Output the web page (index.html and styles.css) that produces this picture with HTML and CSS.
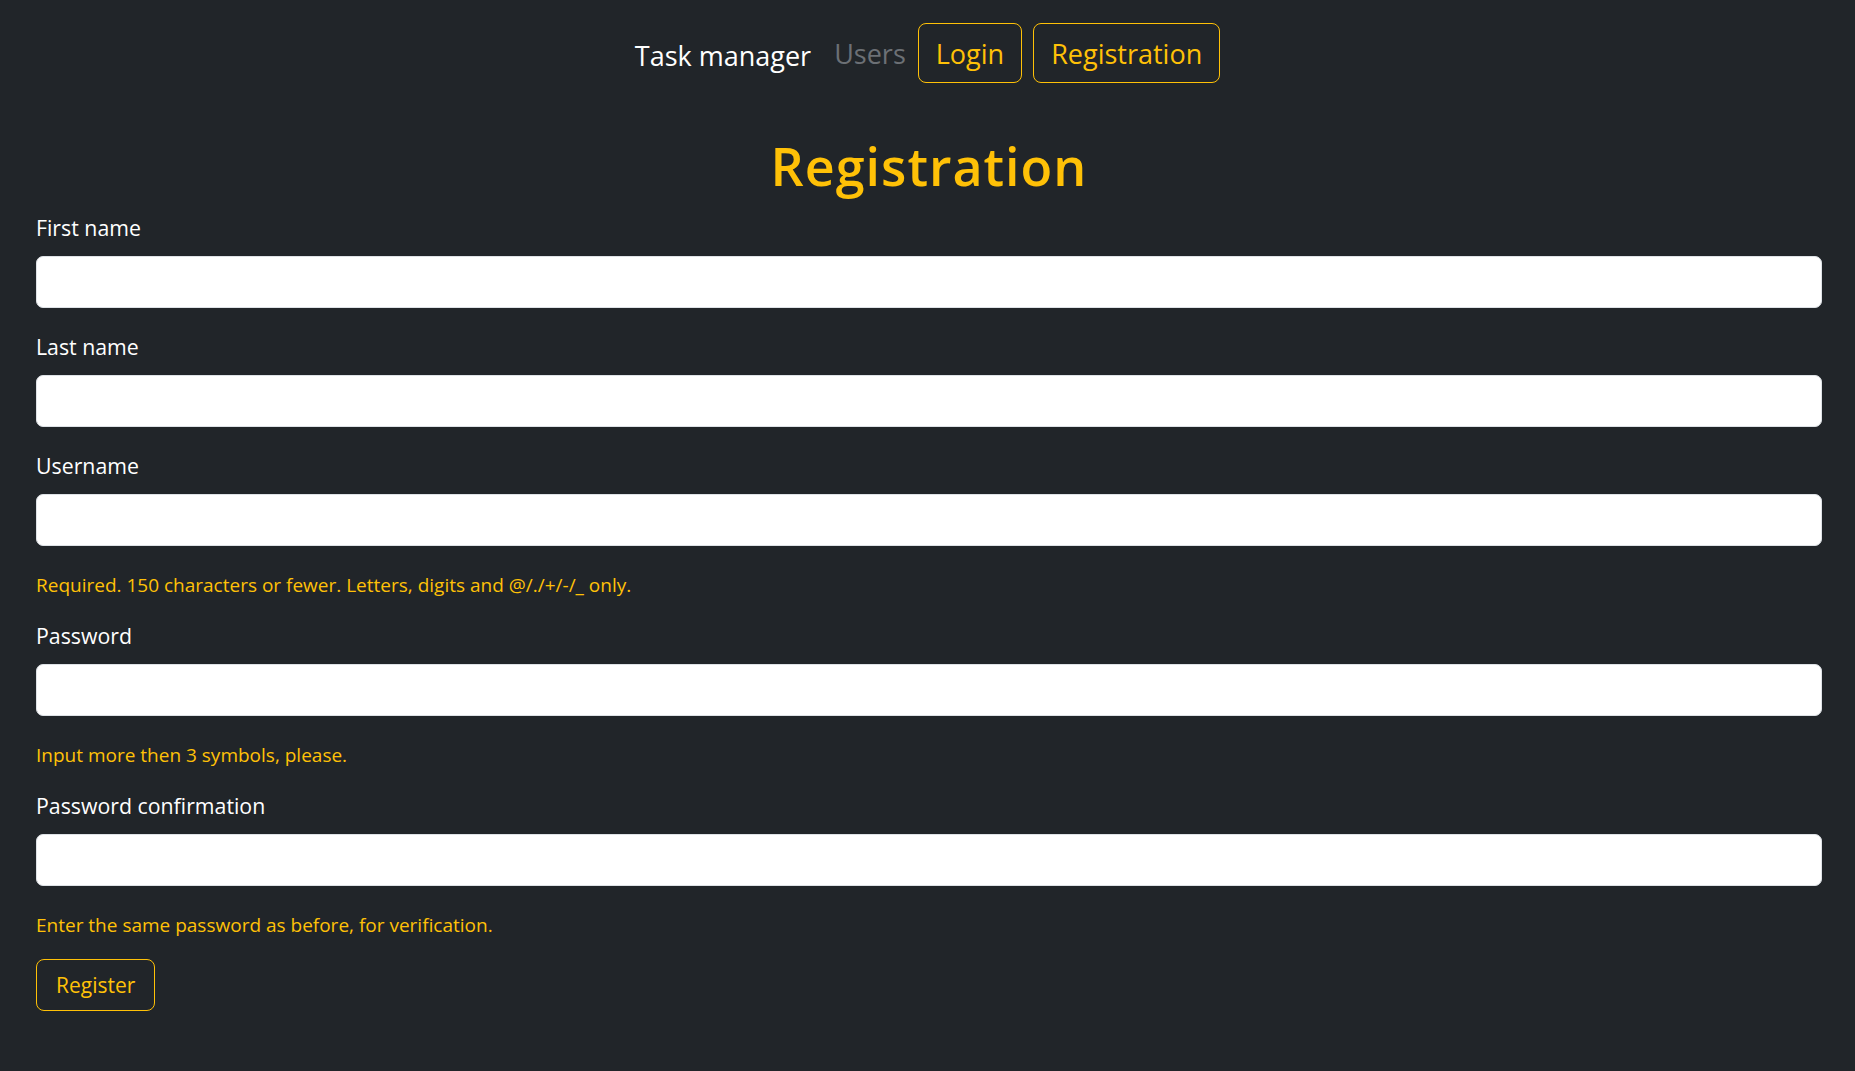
FILE: index.html
```html
<!DOCTYPE html>
<html lang="en">
<head>
<meta charset="utf-8">
<title>Registration</title>
<link rel="stylesheet" href="styles.css">
</head>
<body>
<nav class="topnav">
  <a class="brand" href="#">Task manager</a>
  <a class="nav-link" href="#">Users</a>
  <a class="btn-nav" href="#">Login</a>
  <a class="btn-nav" href="#">Registration</a>
</nav>
<main class="page">
  <h1 class="title">Registration</h1>
  <form class="reg-form">
    <div class="field">
      <label class="field-label" for="first">First name</label>
      <input class="field-input" id="first" type="text">
    </div>
    <div class="field">
      <label class="field-label" for="last">Last name</label>
      <input class="field-input" id="last" type="text">
    </div>
    <div class="field">
      <label class="field-label" for="user">Username</label>
      <input class="field-input" id="user" type="text">
    </div>
    <p class="help">Required. 150 characters or fewer. Letters, digits and @/./+/-/_ only.</p>
    <div class="field">
      <label class="field-label" for="pw1">Password</label>
      <input class="field-input" id="pw1" type="password">
    </div>
    <p class="help">Input more then 3 symbols, please.</p>
    <div class="field">
      <label class="field-label" for="pw2">Password confirmation</label>
      <input class="field-input" id="pw2" type="password">
    </div>
    <p class="help">Enter the same password as before, for verification.</p>
    <button class="btn-register" type="submit">Register</button>
  </form>
</main>
</body>
</html>
```
FILE: styles.css
```css
html, body {
  margin: 0;
  background: #212529;
}
body {
  font-family: "Open Sans", "Noto Sans", sans-serif;
  color: #ffffff;
}
.topnav {
  display: flex;
  justify-content: center;
  align-items: center;
  padding-top: 23px;
}
.brand {
  font-size: 27px;
  color: #ffffff;
  text-decoration: none;
  margin-right: 23px;
  padding-top: 4px;
}
.nav-link {
  font-size: 27px;
  color: #6c7075;
  text-decoration: none;
  margin-right: 12px;
}
.btn-nav {
  display: flex;
  align-items: center;
  box-sizing: border-box;
  height: 60px;
  padding: 0 17px;
  font-size: 27px;
  color: #ffc107;
  text-decoration: none;
  border: 1px solid #ffc107;
  border-radius: 8px;
}
.btn-nav + .btn-nav {
  margin-left: 11px;
}
.page {
  padding: 0 33px 0 36px;
}
.title {
  text-align: center;
  color: #ffc107;
  font-size: 52px;
  line-height: 62px;
  font-weight: 600;
  letter-spacing: 1px;
  margin: 52px 0 14px;
}
.reg-form {
  display: flex;
  flex-direction: column;
  align-items: stretch;
}
.field {
  display: flex;
  flex-direction: column;
  margin-bottom: 22px;
}
.field-label {
  font-size: 21.3px;
  line-height: 34px;
  margin-bottom: 11px;
}
.field-input {
  box-sizing: border-box;
  width: 100%;
  height: 52px;
  background: #ffffff;
  border: 1px solid #dee2e6;
  border-radius: 7px;
  font-size: 21px;
  padding: 0 16px;
}
.help {
  color: #ffc107;
  font-size: 19px;
  line-height: 29px;
  padding-top: 3px;
  margin: 0 0 19px;
}
.btn-register {
  align-self: flex-start;
  box-sizing: border-box;
  height: 52px;
  padding: 0 19px;
  background: transparent;
  color: #ffc107;
  border: 1px solid #ffc107;
  border-radius: 8px;
  font-family: "Open Sans", "Noto Sans", sans-serif;
  font-size: 21px;
}
```
